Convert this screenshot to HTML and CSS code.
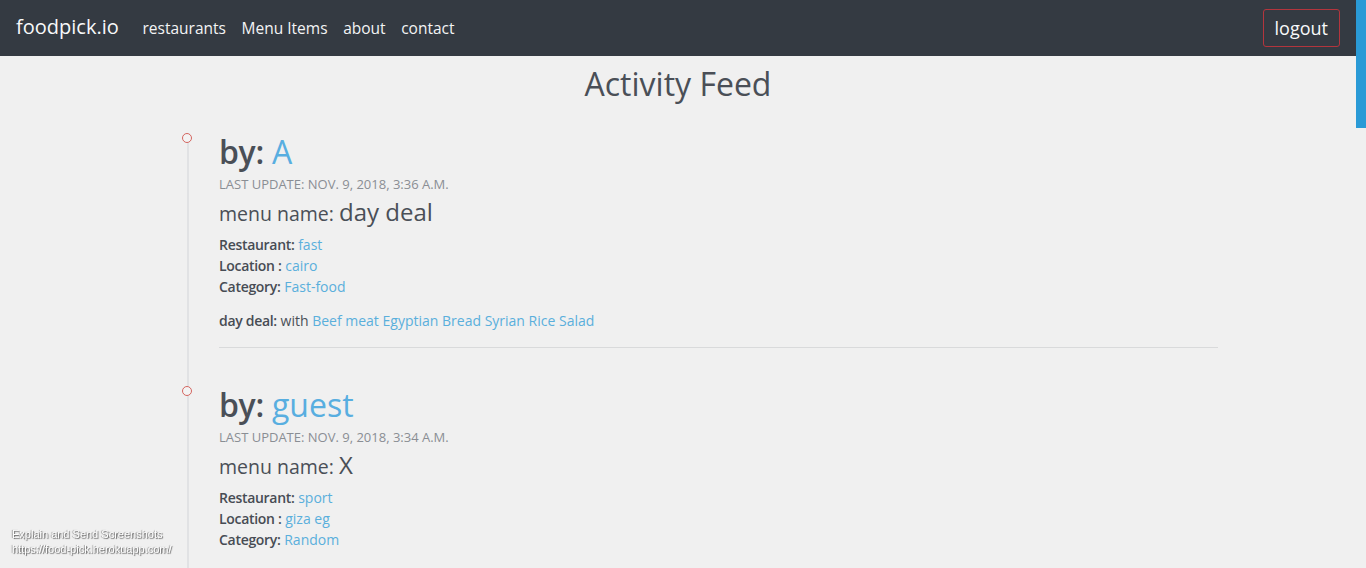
FILE: index.html
```html
<!DOCTYPE html>
<html lang="en">
<head>
<meta charset="utf-8">
<title>foodpick.io</title>
<link rel="stylesheet" href="styles.css">
</head>
<body>
<div class="app">
  <nav class="navbar">
    <a class="brand" href="#">foodpick.io</a>
    <ul class="nav-links">
      <li><a href="#">restaurants</a></li>
      <li><a href="#">Menu Items</a></li>
      <li><a href="#">about</a></li>
      <li><a href="#">contact</a></li>
    </ul>
    <a class="logout" href="#">logout</a>
  </nav>

  <main class="page">
    <h1 class="page-title">Activity Feed</h1>
    <div class="feed">
      <article class="item">
        <span class="marker"></span>
        <h2 class="by">by: <a href="#">A</a></h2>
        <div class="date">Last update: Nov. 9, 2018, 3:36 a.m.</div>
        <h4 class="menu-name">menu name: <span class="menu-value">day deal</span></h4>
        <div class="details">
          <div><b>Restaurant:</b> <a href="#">fast</a></div>
          <div><b>Location :</b> <a href="#">cairo</a></div>
          <div><b>Category:</b> <a href="#">Fast-food</a></div>
        </div>
        <p class="deal"><b>day deal:</b> with <a href="#">Beef meat</a> <a href="#">Egyptian Bread</a> <a href="#">Syrian Rice</a> <a href="#">Salad</a></p>
        <hr class="sep">
      </article>

      <article class="item">
        <span class="marker"></span>
        <h2 class="by">by: <a href="#">guest</a></h2>
        <div class="date">Last update: Nov. 9, 2018, 3:34 a.m.</div>
        <h4 class="menu-name">menu name: <span class="menu-value">X</span></h4>
        <div class="details">
          <div><b>Restaurant:</b> <a href="#">sport</a></div>
          <div><b>Location :</b> <a href="#">giza eg</a></div>
          <div><b>Category:</b> <a href="#">Random</a></div>
        </div>
        <p class="deal"><b>X:</b> with <a href="#">Beef meat</a></p>
        <hr class="sep">
      </article>
    </div>
  </main>
</div>

<div class="scroll-thumb"></div>
<div class="watermark">
  <div>Explain and Send Screenshots</div>
  <div>https://food-pick.herokuapp.com/</div>
</div>
</body>
</html>
```

FILE: styles.css
```css
html, body {
  margin: 0;
  padding: 0;
  height: 100%;
  overflow: hidden;
  background: #f0f0f0;
}

body {
  font-family: "Open Sans", "Noto Sans", sans-serif;
  color: #4a4f57;
}

a {
  text-decoration: none;
}

.app {
  margin-right: 10px;
}

/* NAVBAR */
.navbar {
  height: 56px;
  background: #343a42;
  display: flex;
  align-items: center;
  padding: 0 16px 0 16px;
}

.brand {
  color: #f8f9fa;
  font-size: 20px;
  line-height: 30px;
  margin-right: 16px;
  position: relative;
  top: -1px;
}

.nav-links {
  list-style: none;
  margin: 0;
  padding: 0;
  display: flex;
  flex: 1;
}

.nav-links a {
  display: block;
  color: #f3f4f5;
  font-size: 15.5px;
  line-height: 22px;
  padding: 0 7.8px;
}

.logout {
  color: #f8f9fa;
  font-size: 18px;
  line-height: 26px;
  padding: 5px 11px;
  border: 1px solid #b3353d;
  border-radius: 3px;
}

/* PAGE */
.page-title {
  margin: 8px 0 0;
  font-size: 32px;
  line-height: 40px;
  font-weight: 400;
  text-align: center;
  color: #4a4f57;
}

.feed {
  margin: 29px 0 0 187px;
  width: 1031px;
  border-left: 2px solid #e1e2e4;
  padding-left: 30px;
  box-sizing: border-box;
}

.item {
  position: relative;
  padding-top: 1px;
}

.item + .item {
  margin-top: 38px;
}

.marker {
  position: absolute;
  left: -37px;
  top: 0;
  width: 8px;
  height: 8px;
  border: 1px solid #d4655f;
  border-radius: 50%;
  background: #f3f3f3;
}

.by {
  margin: 0;
  font-size: 32px;
  line-height: 36px;
  font-weight: 600;
  color: #4a4f57;
  letter-spacing: -0.3px;
}

.by a {
  font-weight: 400;
  color: #58aee0;
  letter-spacing: 0;
}

.date {
  margin-top: 5px;
  font-size: 13px;
  line-height: 18px;
  text-transform: uppercase;
  color: #8a8e94;
}

.menu-name {
  margin: 4px 0 0;
  font-size: 19.5px;
  line-height: 30px;
  font-weight: 400;
  color: #4a4f57;
}

.menu-value {
  font-size: 24px;
}

.details {
  margin-top: 5px;
  font-size: 14px;
  line-height: 21px;
}

.details b,
.deal b {
  font-weight: 600;
  color: #474c54;
  letter-spacing: -0.3px;
}

.details a,
.deal a {
  color: #5aafdc;
}

.deal {
  margin: 13px 0 0;
  font-size: 14px;
  line-height: 21px;
  color: #4a4f57;
}

.sep {
  margin: 16px 0 0;
  border: 0;
  border-top: 1px solid #d9dadb;
  height: 0;
}

/* overlays */
.scroll-thumb {
  position: fixed;
  top: 0;
  right: 0;
  width: 10px;
  height: 128px;
  background: #2a9ad6;
}

.watermark {
  position: fixed;
  left: 12px;
  bottom: 11px;
  font-family: "Liberation Sans", Arial, sans-serif;
  font-size: 11px;
  line-height: 15px;
  color: #ffffff;
  text-shadow: 1px 1px 1px #6b6b6b, -1px 0 1px #9a9a9a;
}
```
